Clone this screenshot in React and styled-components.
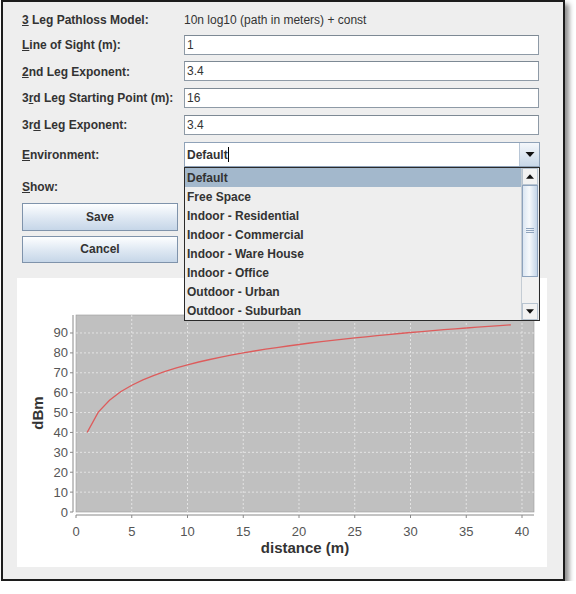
import React from 'react';
import styled, { createGlobalStyle } from 'styled-components';

const GlobalStyle = createGlobalStyle`
  body {
    margin: 0;
    background: #ffffff;
    font-family: "Liberation Sans", Arial, sans-serif;
  }
`;

const Window = styled.div`
  position: relative;
  box-sizing: border-box;
  margin-left: 1px;
  width: 564px;
  height: 581px;
  border: 2px solid #1c1c1c;
  background: #eeeeee;
  box-shadow: 4px 4px 5px rgba(0, 0, 0, 0.45);
  display: flex;
  flex-direction: column;
  padding: 6px 16px 16px 14px;
`;

const Form = styled.div`
  display: grid;
  grid-template-columns: 162px 356px;
  grid-template-rows: 20px 20px 20px 20px 20px 26px 24px;
  row-gap: 6.67px;
  margin-left: 5px;
`;

const Label = styled.div`
  display: flex;
  align-items: center;
  padding-top: ${(p) => p.drop || 0}px;
  font-size: 12px;
  font-weight: bold;
  color: #333333;
  white-space: nowrap;
  u {
    text-decoration: underline;
    text-underline-offset: 1px;
  }
`;

const Value = styled.div`
  display: flex;
  align-items: center;
  padding-top: 4px;
  font-size: 12px;
  color: #333333;
`;

const TextField = styled.div`
  box-sizing: border-box;
  width: 355px;
  height: 20px;
  background: #ffffff;
  border: 1px solid #8e9aa6;
  border-top-color: #7d8994;
  display: flex;
  align-items: center;
  padding-left: 2px;
  font-size: 12px;
  color: #333333;
`;

const ComboCell = styled.div`
  position: relative;
  z-index: 2;
  padding-top: 1px;
`;

const Combo = styled.div`
  box-sizing: border-box;
  width: 356px;
  height: 25px;
  background: #ffffff;
  border: 1px solid #8fa2b8;
  display: flex;
`;

const ComboText = styled.div`
  flex: 1;
  display: flex;
  align-items: center;
  padding-left: 2px;
  font-size: 12px;
  font-weight: bold;
  color: #333333;
`;

const Caret = styled.span`
  display: inline-block;
  width: 1px;
  height: 15px;
  background: #000000;
`;

const ArrowButton = styled.div`
  width: 19px;
  border-left: 1px solid #b8c6d6;
  background: linear-gradient(#f4f7fb, #c9d8e8);
  display: flex;
  align-items: center;
  justify-content: center;
`;

const Popup = styled.div`
  position: absolute;
  top: 26px;
  left: 0;
  box-sizing: border-box;
  width: 356px;
  height: 154px;
  border: 1px solid #2a2a2a;
  background: #eeeeee;
  display: flex;
`;

const List = styled.div`
  flex: 1;
  display: flex;
  flex-direction: column;
`;

const Item = styled.div`
  height: 19px;
  display: flex;
  align-items: center;
  padding-left: 2px;
  font-size: 12px;
  font-weight: bold;
  color: #333333;
  background: ${(p) => (p.selected ? '#a3b8cc' : 'transparent')};
`;

const ScrollBar = styled.div`
  width: 16px;
  margin-right: 1px;
  display: flex;
  flex-direction: column;
  background: #eeeeee;
  border-left: 1px solid #c4ccd4;
`;

const ScrollButton = styled.div`
  height: 17px;
  box-sizing: border-box;
  border: 1px solid #b8c4d0;
  background: #f2f2f2;
  display: flex;
  align-items: center;
  justify-content: center;
`;

const Thumb = styled.div`
  height: 92px;
  box-sizing: border-box;
  border: 1px solid #8ea3bd;
  background: linear-gradient(90deg, #dbe6f2, #f6f9fc 45%, #c4d5e8);
  display: flex;
  align-items: center;
  justify-content: center;
`;

const Track = styled.div`
  flex: 1;
  background: #f1f1f1;
`;

const Buttons = styled.div`
  display: flex;
  flex-direction: column;
  gap: 5px;
  margin: 5px 0 0 5px;
  width: 156px;
`;

const Button = styled.div`
  box-sizing: border-box;
  height: ${(p) => p.h}px;
  border: 1px solid #7f93ab;
  background: linear-gradient(#fdfeff, #dde7f2 55%, #c6d6e8);
  display: flex;
  align-items: center;
  justify-content: center;
  font-size: 12px;
  font-weight: bold;
  color: #333333;
`;

const ChartPanel = styled.div`
  margin-top: 15px;
  flex: 1;
  background: #ffffff;
`;

const TriDown = ({ w = 9 }) => (
  <svg width={w} height={5} viewBox="0 0 9 5">
    <path d="M0 0 H9 L4.5 5 Z" fill="#111" />
  </svg>
);

const TriUp = ({ w = 9 }) => (
  <svg width={w} height={5} viewBox="0 0 9 5">
    <path d="M0 5 H9 L4.5 0 Z" fill="#111" />
  </svg>
);

const Grip = () => (
  <svg width={8} height={6} viewBox="0 0 8 6">
    <path d="M0 0.5 H8 M0 2.5 H8 M0 4.5 H8" stroke="#8ea3bd" strokeWidth="1" />
  </svg>
);

const environments = [
  'Default',
  'Free Space',
  'Indoor - Residential',
  'Indoor - Commercial',
  'Indoor - Ware House',
  'Indoor - Office',
  'Outdoor - Urban',
  'Outdoor - Suburban',
];

// plot geometry, relative to the white chart panel
const PX0 = 59;
const PX1 = 517;
const PY0 = 37;
const PY1 = 234;
const xPx = (v) => PX0 + v * 11.15;
const yPx = (v) => PY1 - v * 1.989;

function Chart() {
  const pts = [];
  for (let d = 1; d <= 39; d += 1) {
    pts.push(`${xPx(d).toFixed(1)},${yPx(40 + 34 * Math.log10(d)).toFixed(1)}`);
  }
  const xTicks = [0, 5, 10, 15, 20, 25, 30, 35, 40];
  const yTicks = [0, 10, 20, 30, 40, 50, 60, 70, 80, 90];
  const tickFont = { fontFamily: '"Liberation Sans", Arial, sans-serif', fontSize: 13, fill: '#555' };
  const labelFont = { fontFamily: '"Liberation Sans", Arial, sans-serif', fontSize: 15, fontWeight: 'bold', fill: '#333' };

  return (
    <svg width="530" height="285" viewBox="0 0 530 285">
      <rect x={PX0} y={PY0} width={PX1 - PX0} height={PY1 - PY0} fill="#c0c0c0" stroke="#999" strokeWidth="0.6" />
      {xTicks.slice(1).map((v) => (
        <line key={`gx${v}`} x1={xPx(v)} x2={xPx(v)} y1={PY0} y2={PY1} stroke="#ececec" strokeWidth="0.8" strokeDasharray="2 2" />
      ))}
      {yTicks.slice(1).map((v) => (
        <line key={`gy${v}`} x1={PX0} x2={PX1} y1={yPx(v)} y2={yPx(v)} stroke="#ececec" strokeWidth="0.8" strokeDasharray="2 2" />
      ))}
      <polyline points={pts.join(' ')} fill="none" stroke="#dd5c5c" strokeWidth="1.3" />

      <line x1="56" x2="56" y1={PY0} y2={PY1} stroke="#888" strokeWidth="1" />
      {yTicks.map((v) => (
        <g key={`ty${v}`}>
          <line x1="53" x2="56" y1={yPx(v)} y2={yPx(v)} stroke="#888" />
          <text x="51" y={yPx(v) + 4.5} textAnchor="end" style={tickFont}>{v}</text>
        </g>
      ))}
      <line x1={PX0} x2={PX1} y1="237" y2="237" stroke="#888" strokeWidth="1" />
      {xTicks.map((v) => (
        <g key={`tx${v}`}>
          <line x1={xPx(v)} x2={xPx(v)} y1="237" y2="240" stroke="#888" />
          <text x={xPx(v)} y="258" textAnchor="middle" style={tickFont}>{v}</text>
        </g>
      ))}
      <text x="22" y="135" textAnchor="middle" transform="rotate(-90 22 135)" dominantBaseline="middle" style={labelFont}>dBm</text>
      <text x="288" y="275" textAnchor="middle" style={labelFont}>distance (m)</text>
    </svg>
  );
}

export default function App() {
  return (
    <>
      <GlobalStyle />
      <Window>
        <Form>
          <Label drop={4}><span><u>3</u> Leg Pathloss Model:</span></Label>
          <Value>10n log10 (path in meters) + const</Value>

          <Label drop={1}><span><u>L</u>ine of Sight (m):</span></Label>
          <div><TextField>1</TextField></div>

          <Label drop={1}><span><u>2</u>nd Leg Exponent:</span></Label>
          <div><TextField>3.4</TextField></div>

          <Label drop={1}><span>3<u>r</u>d Leg Starting Point (m):</span></Label>
          <div><TextField>16</TextField></div>

          <Label drop={1}><span>3r<u>d</u> Leg Exponent:</span></Label>
          <div><TextField>3.4</TextField></div>

          <Label drop={2}><span><u>E</u>nvironment:</span></Label>
          <ComboCell>
            <Combo>
              <ComboText>Default<Caret /></ComboText>
              <ArrowButton><TriDown w={10} /></ArrowButton>
            </Combo>
            <Popup>
              <List>
                {environments.map((env, i) => (
                  <Item key={env} selected={i === 0}>{env}</Item>
                ))}
              </List>
              <ScrollBar>
                <ScrollButton><TriUp w={8} /></ScrollButton>
                <Thumb><Grip /></Thumb>
                <Track />
                <ScrollButton><TriDown w={8} /></ScrollButton>
              </ScrollBar>
            </Popup>
          </ComboCell>

          <Label drop={2}><span><u>S</u>how:</span></Label>
          <div />
        </Form>

        <Buttons>
          <Button h={28}>Save</Button>
          <Button h={27}>Cancel</Button>
        </Buttons>

        <ChartPanel>
          <Chart />
        </ChartPanel>
      </Window>
    </>
  );
}
